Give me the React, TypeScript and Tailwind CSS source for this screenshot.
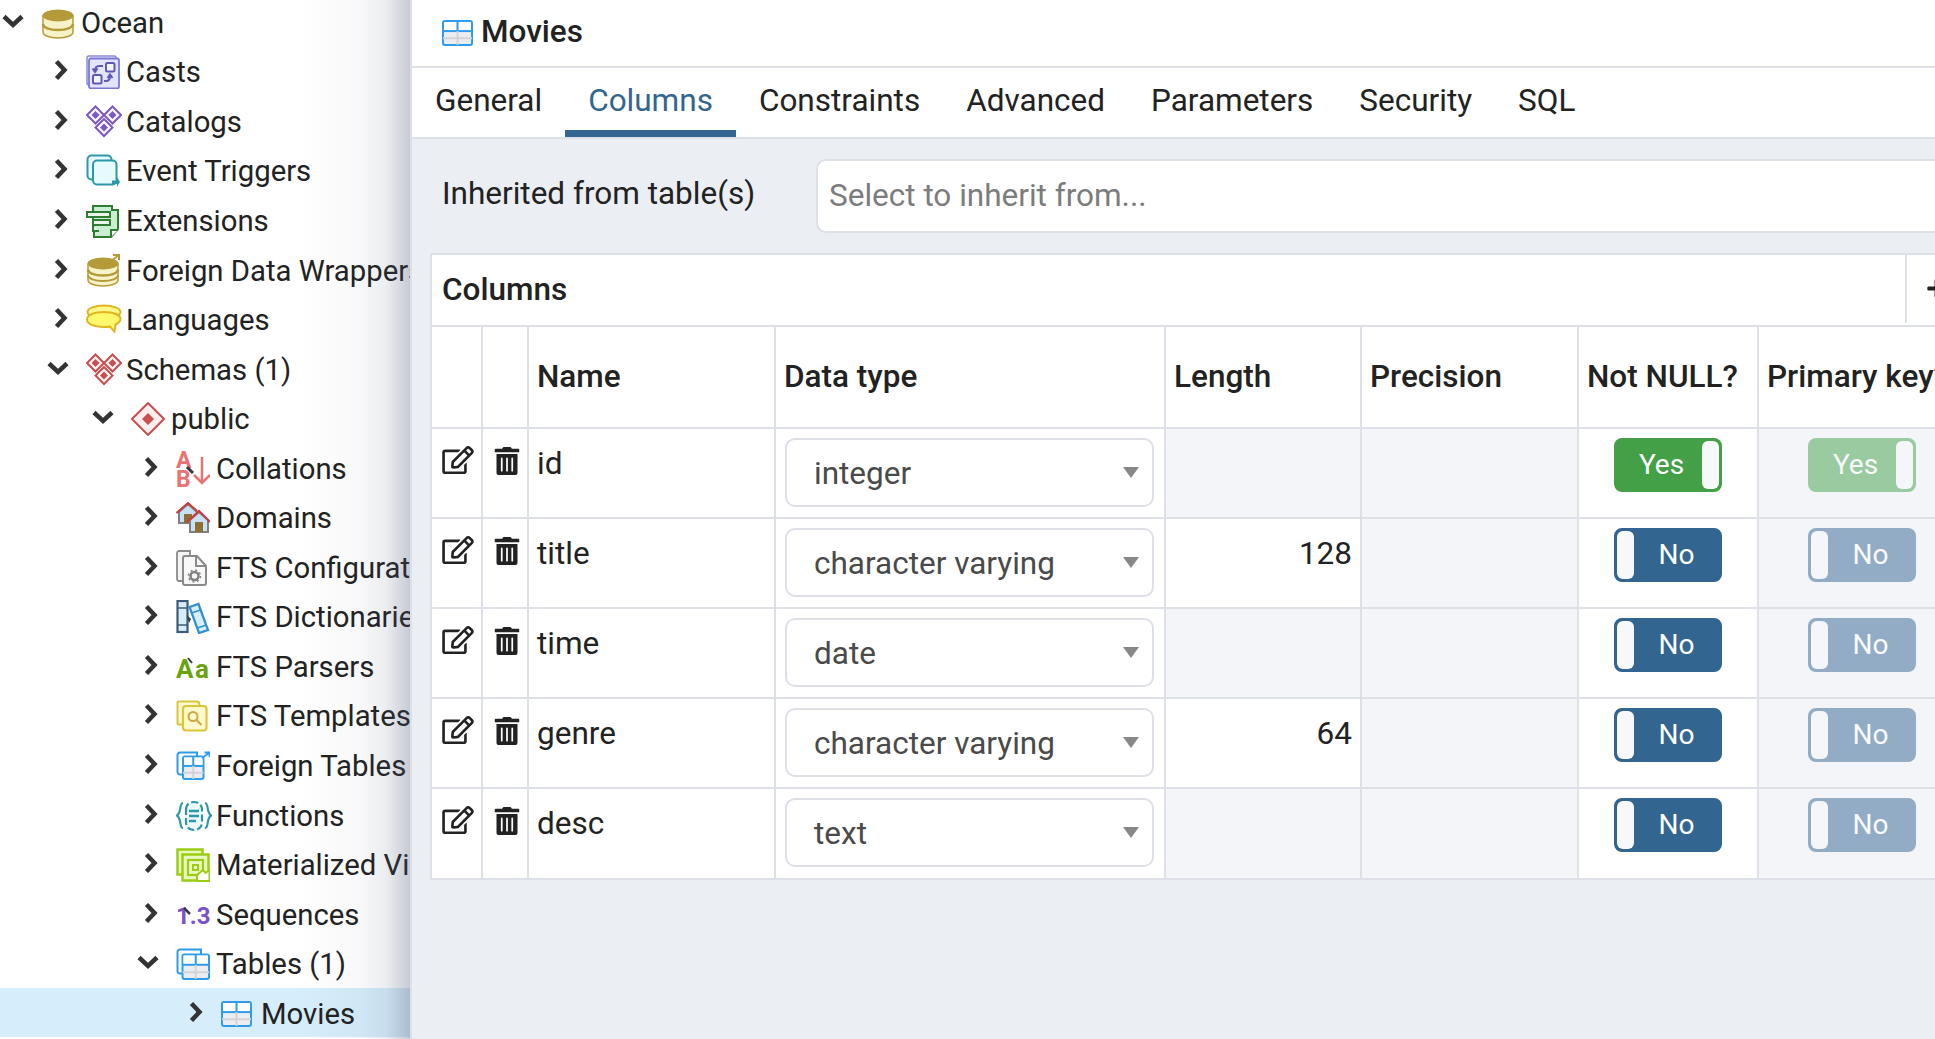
import React from 'react';
import { FaRegEdit, FaTrashAlt, FaPlus } from 'react-icons/fa';

const Db = ({ arrow }: { arrow?: boolean }) => (
  <svg width="34" height="34" viewBox="0 0 34 34">
    <path d="M2 10v16c0 3.5 6.500 6 15 6s15-2.500 15-6V10z" fill="#f7f3c9" stroke="#b59a3a" strokeWidth="1.500" />
    {arrow && <path d="M2 21c0 3.500 6.500 6 15 6s15-2.500 15-6" fill="none" stroke="#b59a3a" strokeWidth="2" />}
    <path d={arrow ? 'M2 15.500c0 3.500 6.500 6 15 6s15-2.500 15-6' : 'M2 18c0 3.500 6.500 6 15 6s15-2.500 15-6'} fill="none" stroke="#b59a3a" strokeWidth="2.500" />
    <ellipse cx="17" cy="9.500" rx="15.500" ry="6" fill="#b59a3a" />
    {arrow && <path d="M25 7l8-6M27 1h6v5" fill="none" stroke="#b59a3a" strokeWidth="2" />}
  </svg>
);

const Casts = () => (
  <svg width="34" height="34" viewBox="0 0 34 34">
    <rect x="1" y="1" width="29" height="29" rx="2" fill="#eeeefc" stroke="#8f8cd8" strokeWidth="1.500" />
    <rect x="3" y="3.500" width="30" height="30" rx="2" fill="#e3e3fb" stroke="#7b78d6" strokeWidth="1.800" />
    <rect x="20" y="8" width="8.500" height="8.500" rx="1.500" fill="#f4f4fe" stroke="#5e59b8" strokeWidth="2" />
    <rect x="7" y="20" width="8.500" height="8.500" rx="1.500" fill="#f4f4fe" stroke="#5e59b8" strokeWidth="2" />
    <path d="M17 11h-4c-2.500 0-4 1.500-4 5M6.500 13.500L9 17l2.500-3.500M18 26h2c3 0 4-1.500 4-5M21.500 23l2.500-3.500 2.500 3.500" fill="none" stroke="#5e59b8" strokeWidth="2" />
  </svg>
);

const Diamonds = ({ color, fill }: { color: string; fill: string }) => (
  <svg width="36" height="34" viewBox="0 0 36 34">
    {[
      [9.500, 10],
      [26.500, 10],
      [18, 22.500],
    ].map(([x, y]) => (
      <g key={`${x}-${y}`}>
        <path d={`M${x} ${y - 8.500}L${x + 8.500} ${y}L${x} ${y + 8.500}L${x - 8.500} ${y}z`} fill={fill} stroke={color} strokeWidth="2" />
        <path d={`M${x} ${y - 4}L${x + 4} ${y}L${x} ${y + 4}L${x - 4} ${y}z`} fill={color} />
      </g>
    ))}
  </svg>
);

const EventTrigger = () => (
  <svg width="34" height="34" viewBox="0 0 34 34">
    <rect x="1.500" y="1.500" width="24" height="24" rx="4" fill="#e6fbfb" stroke="#2f97ab" strokeWidth="2" />
    <rect x="7" y="6.500" width="23.500" height="24" rx="4" fill="#e6fcfc" stroke="#2f97ab" strokeWidth="2" />
    <path d="M26 26.500h5v-3.500l3 5-3 5v-3h-5z" fill="#2f97ab" />
  </svg>
);

const Extension = () => (
  <svg width="34" height="34" viewBox="0 0 34 34">
    <path d="M7 2h19v4h6v19l-7 8H8V22H7z" fill="#c9eed1" stroke="#2e7d32" strokeWidth="2" />
    <path d="M1 8h23v5H1zM7 16h17v5H7zM7 21v6h6" fill="#e8f7ea" stroke="#2e7d32" strokeWidth="2" />
    <path d="M25 33v-7h7" fill="#fff" stroke="#2e7d32" strokeWidth="2" />
  </svg>
);

const Languages = () => (
  <svg width="36" height="34" viewBox="0 0 36 34">
    <ellipse cx="18" cy="9" rx="16.500" ry="6.500" fill="#fff98a" stroke="#e0b521" strokeWidth="2" />
    <path d="M18 9C8 9 1 12 1 16.500S8 24 18 24c2 0 4 0 6-.5l4.500 5 1-7c3-1.500 5-3.500 5-5.500C34.500 12 28 9 18 9z" fill="#fdf96d" stroke="#e0b521" strokeWidth="2" />
  </svg>
);

const Schema = () => (
  <svg width="34" height="34" viewBox="0 0 34 34">
    <path d="M17 1L33 17L17 33L1 17z" fill="#fdeeee" stroke="#c94f4f" strokeWidth="2" />
    <path d="M17 11L23 17L17 23L11 17z" fill="#c94f4f" />
  </svg>
);

const Collations = () => (
  <svg width="34" height="36" viewBox="0 0 34 36">
    <text x="0" y="17" fontFamily="Roboto, sans-serif" fontWeight="700" fontSize="23" fill="#ea7272">A</text>
    <text x="0" y="36" fontFamily="Roboto, sans-serif" fontWeight="700" fontSize="23" fill="#ea7272">B</text>
    <path d="M26 6v26M18 24l8 8 8-8" fill="none" stroke="#ea7272" strokeWidth="2.500" />
    <path d="M11 16l6 6" stroke="#3a3a3a" strokeWidth="3" />
  </svg>
);

const Domains = () => (
  <svg width="34" height="32" viewBox="0 0 34 32">
    <path d="M3 10L12 2l9 8v11H3z" fill="#c7e2f5" stroke="#808080" strokeWidth="2" />
    <rect x="8" y="12" width="8" height="9" fill="#8d6e34" />
    <path d="M0.500 11L12 1l9 8" fill="none" stroke="#c93c3c" strokeWidth="2" />
    <path d="M14 18l9-8 9 8v12H14z" fill="#c7e2f5" stroke="#808080" strokeWidth="2" />
    <rect x="19" y="20" width="8" height="10" fill="#8d6e34" />
    <path d="M11 20L23 9l11 11" fill="none" stroke="#c93c3c" strokeWidth="2" />
  </svg>
);

const FtsConfig = () => (
  <svg width="32" height="36" viewBox="0 0 32 36">
    <path d="M3 1h11v30H3a2 2 0 0 1-2-2V3a2 2 0 0 1 2-2z" fill="#f4f4f4" stroke="#8a8a8a" strokeWidth="1.800" />
    <path d="M9 6h12l9 10v17a2 2 0 0 1-2 2H9a2 2 0 0 1-2-2V8a2 2 0 0 1 2-2z" fill="#f8f8f8" stroke="#8a8a8a" strokeWidth="2" />
    <path d="M20 6v10h10" fill="none" stroke="#8a8a8a" strokeWidth="2" />
    <circle cx="18.500" cy="26" r="4" fill="none" stroke="#808080" strokeWidth="2.500" />
    <circle cx="18.500" cy="26" r="6" fill="none" stroke="#808080" strokeWidth="1.500" strokeDasharray="2 2.700" />
  </svg>
);

const FtsDict = () => (
  <svg width="34" height="34" viewBox="0 0 34 34">
    <rect x="1.500" y="1" width="10" height="31" fill="#d5eef9" stroke="#3c5c76" strokeWidth="2.200" />
    <path d="M1.500 8h10M1.500 25h10" stroke="#3c5c76" strokeWidth="1.500" />
    <path d="M13.500 7l9-3 9.500 26-9 3z" fill="#d5eef9" stroke="#2f8fcf" strokeWidth="2.200" />
    <path d="M15.500 13l9-3M21.500 28l9-3" stroke="#2f8fcf" strokeWidth="1.500" />
    <path d="M11 15l4 4-2 4" fill="#3a3a3a" />
  </svg>
);

const FtsParsers = () => (
  <svg width="36" height="32" viewBox="0 0 36 32">
    <text x="0" y="27" fontFamily="Roboto, sans-serif" fontWeight="700" fontSize="26" fill="#6aa30d">A</text>
    <text x="19" y="27" fontFamily="Roboto, sans-serif" fontWeight="700" fontSize="26" fill="#6aa30d">a</text>
    <path d="M12 7l4 5" stroke="#3a3a3a" strokeWidth="2" />
  </svg>
);

const FtsTemplates = () => (
  <svg width="32" height="33" viewBox="0 0 32 33">
    <path d="M2.500 1.500h18c2 0 3 1 3 3v20h-21c-1 0-1-1-1-1v-21z" fill="#fdf9c8" stroke="#dcc53a" strokeWidth="2" />
    <rect x="7" y="6" width="23.500" height="24.500" rx="3" fill="#fdf9cc" stroke="#dcc53a" strokeWidth="2.200" />
    <circle cx="17" cy="16.500" r="4.500" fill="none" stroke="#d1a640" strokeWidth="2" />
    <path d="M20.500 20l5 5" stroke="#d1a640" strokeWidth="2" />
  </svg>
);

const TableGrid = ({ x, y, w, h }: { x: number; y: number; w: number; h: number }) => (
  <g>
    <rect x={x} y={y} width={w} height={h} rx="2" fill="#ecedf0" stroke="#2f9bec" strokeWidth="2" />
    <rect x={x + 1} y={y + 1} width={w - 2} height={h * 0.42} fill="#fff" />
    <path d={`M${x} ${y + h * 0.42}h${w}`} stroke="#2f9bec" strokeWidth="2" />
    <path d={`M${x} ${y + h * 0.72}h${w}M${x + w * 0.5} ${y + h * 0.42}v${h * 0.58}`} stroke="#d2d3d8" strokeWidth="2" />
    <path d={`M${x + w * 0.5} ${y}v${h * 0.42}`} stroke="#2f9bec" strokeWidth="2" />
  </g>
);

const ForeignTables = () => (
  <svg width="34" height="30" viewBox="0 0 34 30">
    <path d="M1.500 4a2.500 2.500 0 0 1 2.500-2.500h17v22H4a2.500 2.500 0 0 1-2.500-2.500z" fill="#fff" stroke="#2f9bec" strokeWidth="2" />
    <TableGrid x={7} y={5.500} w={20.500} h={22.500} />
    <path d="M26 7l7-5M28.500 1.500H33.500V6" fill="none" stroke="#2f9bec" strokeWidth="1.800" />
  </svg>
);

const Functions = () => (
  <svg width="36" height="32" viewBox="0 0 36 32">
    <rect x="9" y="2" width="18" height="28" rx="7" fill="#ebfbfc" />
    <path d="M7 3C3 3 6 12 1 15.500C6 19 3 28 7 28M29 3c4 0 1 9 6 12.500C30 19 33 28 29 28" fill="none" stroke="#2f97ab" strokeWidth="2.200" />
    <path d="M10 10c0-5 3-8 8-8s8 3 8 8v12c0 5-3 8-8 8s-8-3-8-8z" fill="none" stroke="#2f97ab" strokeWidth="2.200" strokeDasharray="7 3" />
    <path d="M13 11h10M13 16h10M13 21h7" stroke="#2f97ab" strokeWidth="2.400" />
  </svg>
);

const MatView = () => (
  <svg width="34" height="34" viewBox="0 0 34 34">
    <rect x="1.500" y="1.500" width="25" height="25" fill="#e7f9bd" stroke="#9ccc14" strokeWidth="2.500" />
    <rect x="6.500" y="6.500" width="26" height="26" fill="#e7f9bd" stroke="#9ccc14" strokeWidth="2.500" />
    <rect x="12" y="12" width="15" height="15" fill="none" stroke="#9ccc14" strokeWidth="2.200" />
    <rect x="17" y="17" width="5" height="5" fill="none" stroke="#9ccc14" strokeWidth="2" />
    <path d="M21 27l6-5 2.500 3 4-3v11H21z" fill="#fff" stroke="#9ccc14" strokeWidth="2" />
  </svg>
);

const Sequences = () => (
  <svg width="36" height="24" viewBox="0 0 36 24">
    <text x="0" y="21" fontFamily="Roboto, sans-serif" fontWeight="700" fontSize="24" fill="#7a52c4">1.3</text>
    <path d="M8 5l6 6" stroke="#3a3a3a" strokeWidth="2.500" />
  </svg>
);

const Tables = () => (
  <svg width="34" height="32" viewBox="0 0 34 32">
    <path d="M1.500 4A2.500 2.500 0 0 1 4 1.500h21v24H4A2.500 2.500 0 0 1 1.500 23z" fill="#fff" stroke="#2f9bec" strokeWidth="2" />
    <TableGrid x={6.500} y={6.500} w={26.500} h={24.500} />
  </svg>
);

const TableIcon = () => (
  <svg width="31" height="26" viewBox="0 0 31 26">
    <TableGrid x={1} y={1} w={29} h={24} />
  </svg>
);

const treeItems = [
  { label: 'Ocean', level: 'pl-0', open: true, icon: <Db /> },
  { label: 'Casts', level: 'pl-[45px]', icon: <Casts /> },
  { label: 'Catalogs', level: 'pl-[45px]', icon: <Diamonds color="#7e57c2" fill="#fbf9ff" /> },
  { label: 'Event Triggers', level: 'pl-[45px]', icon: <EventTrigger /> },
  { label: 'Extensions', level: 'pl-[45px]', icon: <Extension /> },
  { label: 'Foreign Data Wrappers', level: 'pl-[45px]', icon: <Db arrow /> },
  { label: 'Languages', level: 'pl-[45px]', icon: <Languages /> },
  { label: 'Schemas (1)', level: 'pl-[45px]', open: true, icon: <Diamonds color="#c94f4f" fill="#fff6f6" /> },
  { label: 'public', level: 'pl-[90px]', open: true, icon: <Schema /> },
  { label: 'Collations', level: 'pl-[135px]', icon: <Collations /> },
  { label: 'Domains', level: 'pl-[135px]', icon: <Domains /> },
  { label: 'FTS Configurations', level: 'pl-[135px]', icon: <FtsConfig /> },
  { label: 'FTS Dictionaries', level: 'pl-[135px]', icon: <FtsDict /> },
  { label: 'FTS Parsers', level: 'pl-[135px]', icon: <FtsParsers /> },
  { label: 'FTS Templates', level: 'pl-[135px]', icon: <FtsTemplates /> },
  { label: 'Foreign Tables', level: 'pl-[135px]', icon: <ForeignTables /> },
  { label: 'Functions', level: 'pl-[135px]', icon: <Functions /> },
  { label: 'Materialized Views', level: 'pl-[135px]', icon: <MatView /> },
  { label: 'Sequences', level: 'pl-[135px]', icon: <Sequences /> },
  { label: 'Tables (1)', level: 'pl-[135px]', open: true, icon: <Tables /> },
  { label: 'Movies', level: 'pl-[180px]', selected: true, icon: <TableIcon /> },
];

const tabs = ['General', 'Columns', 'Constraints', 'Advanced', 'Parameters', 'Security', 'SQL'];

const rows = [
  { name: 'id', type: 'integer', length: '', notNull: true, pk: true },
  { name: 'title', type: 'character varying', length: '128', notNull: false, pk: false },
  { name: 'time', type: 'date', length: '', notNull: false, pk: false },
  { name: 'genre', type: 'character varying', length: '64', notNull: false, pk: false },
  { name: 'desc', type: 'text', length: '', notNull: false, pk: false },
];

const gridCols = 'grid grid-cols-[51px_46px_247px_390px_196px_217px_180px_208px]';
const cellBorder = 'border-r-2 border-b-2 border-[#dde0e6]';

function Chevron({ open }: { open?: boolean }) {
  return (
    <span className="flex w-[41px] shrink-0 -translate-y-[1px] justify-start">
      {open ? (
        <svg width="24" height="16" viewBox="0 0 24 16" className="ml-[1px]">
          <path d="M3 3.500l9 8.500 9-8.500" fill="none" stroke="#333" strokeWidth="4.500" />
        </svg>
      ) : (
        <svg width="16" height="22" viewBox="0 0 16 22" className="ml-[8px]">
          <path d="M3.500 2.500l8 8.500-8 8.500" fill="none" stroke="#333" strokeWidth="4.500" />
        </svg>
      )}
    </span>
  );
}

function Toggle({ on, disabled }: { on: boolean; disabled?: boolean }) {
  return (
    <div className={`flex h-[54px] w-[108px] items-center rounded-[8px] border-[3px] text-[28px] text-white ${on ? 'border-[#43a047] bg-[#43a047]' : 'border-[#326690] bg-[#326690]'} ${disabled ? 'opacity-50' : ''} ${on ? 'flex-row-reverse' : ''}`}>
      <span className="h-[48px] w-[17px] shrink-0 rounded-[6px] bg-[#f7f8fa]" />
      <span className={`flex-1 text-center ${on ? 'pl-[4px]' : ''}`}>{on ? 'Yes' : 'No'}</span>
    </div>
  );
}

function DataType({ value }: { value: string }) {
  return (
    <div className="mt-[9px] ml-[9px] flex h-[69px] w-[369px] items-center justify-between rounded-[10px] border-2 border-[#dde0e6] bg-white pr-[13px] pl-[27px] text-[#4a4a4a]">
      <span className="translate-y-[1px]">{value}</span>
      <span className="h-0 w-0 border-x-[8px] border-t-[11px] border-x-transparent border-t-[#888]" />
    </div>
  );
}

export default function App() {
  return (
    <div className="flex h-[1039px] w-[1935px] overflow-hidden bg-white font-['Roboto',sans-serif] text-[31.5px] text-[#222]">
      <aside className="relative h-full w-[410px] shrink-0 overflow-hidden text-[29.3px]">
        <div className="-mt-[3px] flex flex-col">
          {treeItems.map((item) => (
            <div key={item.label} className={`flex h-[49.55px] shrink-0 items-center whitespace-nowrap ${item.level} ${item.selected ? 'bg-[#d6edfb]' : ''}`}>
              <Chevron open={item.open} />
              <span className="flex w-[40px] shrink-0 translate-y-[1px] items-center justify-start">{item.icon}</span>
              <span className="translate-y-[1.5px]">{item.label}</span>
            </div>
          ))}
        </div>
        <div className="pointer-events-none absolute inset-y-0 right-0 w-[110px] bg-[linear-gradient(to_right,rgba(70,80,110,0)_0%,rgba(70,80,110,0.04)_55%,rgba(70,80,110,0.1)_78%,rgba(70,80,110,0.3)_100%)]" />
      </aside>

      <main className="flex min-w-0 flex-1 flex-col border-l-2 border-[#dde0e6] bg-[#ebeef3]">
        <div className="flex h-[68px] shrink-0 items-center gap-[8px] border-b-2 border-[#dde0e6] bg-white pl-[30px]">
          <TableIcon />
          <span className="-translate-y-[1px] font-medium">Movies</span>
        </div>

        <div className="flex h-[71px] shrink-0 border-b-2 border-[#dde0e6] bg-white">
          {tabs.map((tab) => (
            <div key={tab} className={`flex h-[69px] items-center border-b-[7px] px-[23px] pt-[3px] ${tab === 'Columns' ? 'border-[#326690] text-[#326690]' : 'border-transparent'}`}>
              {tab}
            </div>
          ))}
        </div>

        <div className="pt-[20px] pl-[18px]">
          <div className="flex items-center">
            <label className="w-[386px] shrink-0 -translate-y-[2px] pl-[12px]">Inherited from table(s)</label>
            <div className="flex h-[74px] flex-1 items-center rounded-l-[10px] border-y-2 border-l-2 border-[#dde0e6] bg-white pl-[11px] text-[#7c7c7c]">
              Select to inherit from...
            </div>
          </div>

          <div className="mt-[20px] w-[1535px] border-t-2 border-l-2 border-[#dde0e6]">
            <div className="flex h-[72px] items-center border-b-2 border-[#dde0e6] bg-white">
              <span className="flex-1 pl-[10px] font-medium">Columns</span>
              <span className="flex h-full w-[60px] -translate-y-[2px] items-center justify-center border-l-2 border-[#dde0e6]">
                <FaPlus size={21} />
              </span>
            </div>

            <div className={`${gridCols} h-[102px] bg-white font-medium`}>
              <div className={cellBorder} />
              <div className={cellBorder} />
              {['Name', 'Data type', 'Length', 'Precision', 'Not NULL?', 'Primary key?'].map((title) => (
                <div key={title} className={`flex items-center overflow-hidden px-[8px] whitespace-nowrap ${cellBorder}`}>
                  {title}
                </div>
              ))}
            </div>

            {rows.map((row, i) => (
              <div key={row.name} className={`${gridCols} ${i === rows.length - 1 ? 'h-[91px]' : 'h-[90px]'} bg-white`}>
                <div className={`pt-[17px] pl-[10px] ${cellBorder}`}>
                  <FaRegEdit size={28} color="#222" className="w-[32px]" />
                </div>
                <div className={`pt-[18px] pl-[10px] ${cellBorder}`}>
                  <FaTrashAlt size={28} color="#222" />
                </div>
                <div className={`pt-[11px] pl-[8px] ${cellBorder}`}>{row.name}</div>
                <div className={cellBorder}>
                  <DataType value={row.type} />
                </div>
                <div className={`pt-[11px] pr-[8px] text-right ${cellBorder} ${row.length ? '' : 'bg-[#f3f5f9]'}`}>{row.length}</div>
                <div className={`bg-[#f3f5f9] ${cellBorder}`} />
                <div className={`flex justify-center pt-[9px] ${cellBorder}`}>
                  <Toggle on={row.notNull} />
                </div>
                <div className={`flex justify-center bg-[#f3f5f9] pt-[9px] ${cellBorder}`}>
                  <Toggle on={row.pk} disabled />
                </div>
              </div>
            ))}
          </div>
        </div>
      </main>
    </div>
  );
}
